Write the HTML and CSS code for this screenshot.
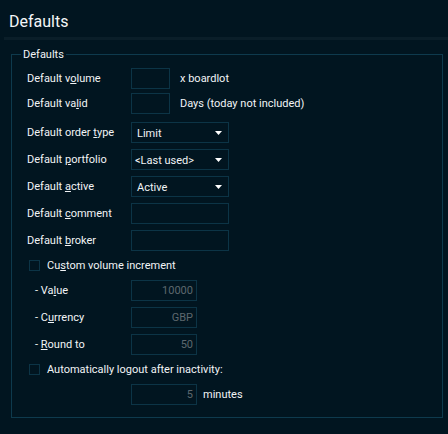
FILE: index.html
```html
<!DOCTYPE html>
<html>
<head>
<meta charset="utf-8">
<link rel="stylesheet" href="styles.css">
</head>
<body>
<div class="header"><h1 class="title">Defaults</h1></div>
<div class="sep"></div>
<fieldset class="group">
  <legend class="legend">Defaults</legend>
  <div class="row r1">
    <span class="label">Default v<u>o</u>lume</span>
    <span class="box w39"></span>
    <span class="after">x boardlot</span>
  </div>
  <div class="row r2">
    <span class="label">Default va<u>l</u>id</span>
    <span class="box w39"></span>
    <span class="after">Days (today not included)</span>
  </div>
  <div class="row r3">
    <span class="label">Default order <u>t</u>ype</span>
    <span class="box w98 select"><span class="val">Limit</span><svg class="arrow" width="7" height="4" viewBox="0 0 7 4"><polygon points="0,0 7,0 3.5,4" fill="#fff"/></svg></span>
  </div>
  <div class="row r4">
    <span class="label">Default <u>p</u>ortfolio</span>
    <span class="box w98 select"><span class="val lt">&lt;Last used&gt;</span><svg class="arrow" width="7" height="4" viewBox="0 0 7 4"><polygon points="0,0 7,0 3.5,4" fill="#fff"/></svg></span>
  </div>
  <div class="row r5">
    <span class="label">Default <u>a</u>ctive</span>
    <span class="box w98 select"><span class="val">Active</span><svg class="arrow" width="7" height="4" viewBox="0 0 7 4"><polygon points="0,0 7,0 3.5,4" fill="#fff"/></svg></span>
  </div>
  <div class="row r6">
    <span class="label">Default <u>c</u>omment</span>
    <span class="box w98"></span>
  </div>
  <div class="row r7">
    <span class="label">Default <u>b</u>roker</span>
    <span class="box w98"></span>
  </div>
  <div class="row check r8">
    <span class="cb"></span>
    <span class="cblabel">Cu<u>s</u>tom volume increment</span>
  </div>
  <div class="row r9">
    <span class="label sub">- Va<u>l</u>ue</span>
    <span class="box w66 num">10000</span>
  </div>
  <div class="row r10">
    <span class="label sub">- C<u>u</u>rrency</span>
    <span class="box w66 num">GBP</span>
  </div>
  <div class="row r11">
    <span class="label sub">- <u>R</u>ound to</span>
    <span class="box w66 num">50</span>
  </div>
  <div class="row check r12">
    <span class="cb"></span>
    <span class="cblabel">Automatically logout after inactivity:</span>
  </div>
  <div class="row r13">
    <span class="label"></span>
    <span class="box w66 num">5</span>
    <span class="after min">minutes</span>
  </div>
</fieldset>
</body>
</html>
```
FILE: styles.css
```css
html, body {
  margin: 0;
  padding: 0;
  background: #011520;
  color: #f1f4f6;
  font-family: Roboto, "Liberation Sans", sans-serif;
  font-size: 11px;
}
.header {
  padding: 12px 0 6px 9px;
}
.title {
  margin: 0;
  font-size: 16px;
  line-height: 19px;
  font-weight: 400;
  color: #f4f6f8;
}
.sep {
  height: 3px;
  margin-left: 4px;
  background: #0a1e29;
}
.group {
  margin: 8px 0 0 11px;
  width: 432px;
  box-sizing: border-box;
  border: 1px solid #0e3a4d;
  padding: 7px 15px 12px 15px;
  min-width: 0;
}
.legend {
  margin-left: -6px;
  padding: 0 2px;
  font-size: 11px;
  line-height: 13px;
  color: #f1f4f6;
}
.row {
  display: flex;
  align-items: center;
  height: 21px;
}
.r2 { margin-top: 4px; }
.r3 { margin-top: 8px; }
.r4, .r5, .r6, .r7 { margin-top: 6px; }
.r8 { margin-top: 4px; }
.r9 { margin-top: 4px; }
.r10, .r11 { margin-top: 6px; }
.r12 { margin-top: 4px; }
.r13 { margin-top: 4px; }
.label {
  width: 104px;
  flex: none;
  white-space: nowrap;
}
.label.sub {
  padding-left: 8px;
  box-sizing: border-box;
}
u {
  text-decoration: underline;
  text-underline-offset: 1px;
}
.box {
  flex: none;
  box-sizing: border-box;
  height: 21px;
  border: 1px solid #0c3446;
  display: flex;
  align-items: center;
}
.w39 { width: 39px; }
.w98 { width: 98px; }
.w66 { width: 66px; }
.select {
  justify-content: space-between;
  padding: 1px 6px 0 5px;
}
.select .val.lt { margin-left: -2px; }
.arrow { display: block; }
.num {
  justify-content: flex-end;
  padding-right: 3px;
  color: #5d686e;
  font-size: 11px;
}
.after {
  margin-left: 10px;
  white-space: nowrap;
}
.after.min { margin-left: 6px; }
.check {
  padding-left: 2px;
}
.cb {
  width: 11px;
  height: 11px;
  box-sizing: border-box;
  border: 1px solid #0c3446;
  flex: none;
}
.cblabel {
  margin-left: 7px;
  white-space: nowrap;
}
```
